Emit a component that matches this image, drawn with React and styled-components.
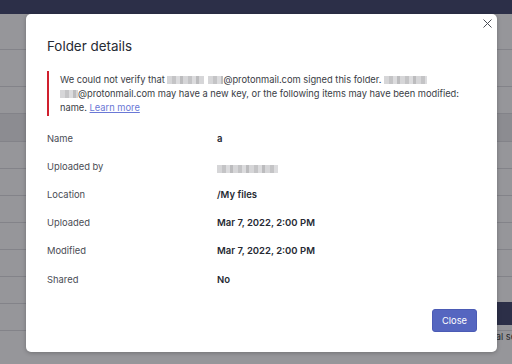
import React from 'react'
import styled, { createGlobalStyle } from 'styled-components'

const GlobalStyle = createGlobalStyle`
  html, body { margin: 0; padding: 0; }
  body {
    font-family: Inter, "Noto Sans", "Liberation Sans", sans-serif;
    overflow: hidden;
  }
`

const Page = styled.div`
  position: relative;
  width: 512px;
  height: 364px;
  overflow: hidden;
  background: #fff;
  display: flex;
  flex-direction: column;
`

const TopBar = styled.div`
  height: 14px;
  flex: none;
  background: #3c4268;
`

const List = styled.div`
  flex: 1;
  display: flex;
  flex-direction: column;
`

const Toolbar = styled.div`
  height: 35px;
  border-bottom: 1px solid #dcdcdf;
  flex: none;
`

const HeadRow = styled.div`
  height: 36px;
  border-bottom: 1px solid #dcdcdf;
  flex: none;
`

const Row = styled.div`
  height: ${p => p.$h || 26}px;
  flex: none;
  border-bottom: 1px solid #dcdcdf;
  background: ${p => (p.$selected ? '#ececef' : 'transparent')};
`

const Panel = styled.div`
  position: absolute;
  left: 437px;
  right: 0;
  top: 302px;
  bottom: 0;
  display: flex;
  flex-direction: column;
`

const PanelHeader = styled.div`
  height: 23px;
  flex: none;
  background: #3c4268;
`

const PanelText = styled.div`
  padding: 6px 0 0 28px;
  height: 20px;
  font-size: 9.3px;
  color: #333;
  white-space: nowrap;
`

const PanelBody = styled.div`
  flex: 1;
  background: #fff;
  margin-top: 7px;
`

const Backdrop = styled.div`
  position: absolute;
  inset: 0;
  background: rgba(26, 27, 34, 0.46);
`

const Modal = styled.div`
  position: absolute;
  left: 26px;
  top: 14px;
  width: 471px;
  height: 338px;
  box-sizing: border-box;
  background: #fff;
  border-radius: 5px;
  box-shadow: 0 1px 4px rgba(0, 0, 0, 0.25);
  padding: 23px 20px 20px 21px;
  display: flex;
  flex-direction: column;
  color: #262a33;
`

const CloseX = styled.button`
  position: absolute;
  top: 2px;
  right: 3px;
  width: 14px;
  height: 14px;
  padding: 0;
  border: none;
  background: none;
  display: flex;
  align-items: center;
  justify-content: center;
`

const Title = styled.h2`
  margin: 0;
  font-size: 13.4px;
  font-weight: 400;
  line-height: 18px;
  color: #262a33;
`

const Alert = styled.div`
  margin-top: 16px;
  border-left: 2px solid #d0202e;
  padding: 2px 0 1px 11px;
  font-size: 9.3px;
  line-height: 14px;
  color: #3a3d45;
`

const Email = styled.span`
  white-space: nowrap;
`

const Blur = styled.span`
  display: inline-block;
  width: ${p => p.$w}px;
  height: 8px;
  margin-right: ${p => p.$mr || 0}px;
  vertical-align: -1px;
  background: repeating-linear-gradient(
    90deg,
    #d6d6d8 0 5px,
    #c4c4c6 5px 9px,
    #dcdcde 9px 13px,
    #bcbcbe 13px 16px
  );
  filter: blur(0.6px);
`

const Link = styled.a`
  color: #6a78d6;
  text-decoration: underline;
`

const Details = styled.div`
  margin-top: 8px;
  display: flex;
  flex-direction: column;
`

const DetailRow = styled.div`
  display: grid;
  grid-template-columns: 170px 1fr;
  align-items: center;
  height: 28.2px;
`

const Label = styled.span`
  color: #4a4d55;
  font-size: 9.4px;
`

const Value = styled.span`
  color: #262a33;
  font-weight: 600;
  font-size: 9.5px;
`

const Footer = styled.div`
  margin-top: auto;
  display: flex;
  justify-content: flex-end;
`

const Button = styled.button`
  height: 23px;
  width: 45px;
  padding: 0;
  border: 1px solid #4b5bb5;
  border-radius: 3px;
  background: #5566c0;
  color: #fff;
  font-family: inherit;
  font-size: 9.3px;
`

const details = [
  ['Name', 'a'],
  ['Uploaded by', null],
  ['Location', '/My files'],
  ['Uploaded', 'Mar 7, 2022, 2:00 PM'],
  ['Modified', 'Mar 7, 2022, 2:00 PM'],
  ['Shared', 'No'],
]

export default function App() {
  return (
    <>
      <GlobalStyle />
      <Page>
        <TopBar />
        <List>
          <Toolbar />
          <HeadRow />
          <Row />
          <Row $selected $h={27} />
          <Row />
          <Row />
          <Row />
          <Row />
          <Row />
          <Row />
          <Row />
        </List>
        <Panel>
          <PanelHeader />
          <PanelText>Personal settings</PanelText>
          <PanelBody />
        </Panel>
        <Backdrop />
        <Modal>
          <CloseX aria-label="Close">
            <svg width="9" height="9" viewBox="0 0 9 9">
              <path d="M0.5 0.5 L8.5 8.5 M8.5 0.5 L0.5 8.5" stroke="#4a4d55" strokeWidth="1" fill="none" />
            </svg>
          </CloseX>
          <Title>Folder details</Title>
          <Alert>
            We could not verify that <Blur $w={37} $mr={4} /><Email><Blur $w={15} />@protonmail.com</Email> signed this folder. <Blur $w={43} />{' '}
            <Email><Blur $w={18} />@protonmail.com</Email> may have a new key, or the following items may have been modified: name.{' '}
            <Link href="#">Learn more</Link>
          </Alert>
          <Details>
            {details.map(([label, value]) => (
              <DetailRow key={label}>
                <Label>{label}</Label>
                {value ? <Value>{value}</Value> : <span><Blur $w={61} /></span>}
              </DetailRow>
            ))}
          </Details>
          <Footer>
            <Button>Close</Button>
          </Footer>
        </Modal>
      </Page>
    </>
  )
}
